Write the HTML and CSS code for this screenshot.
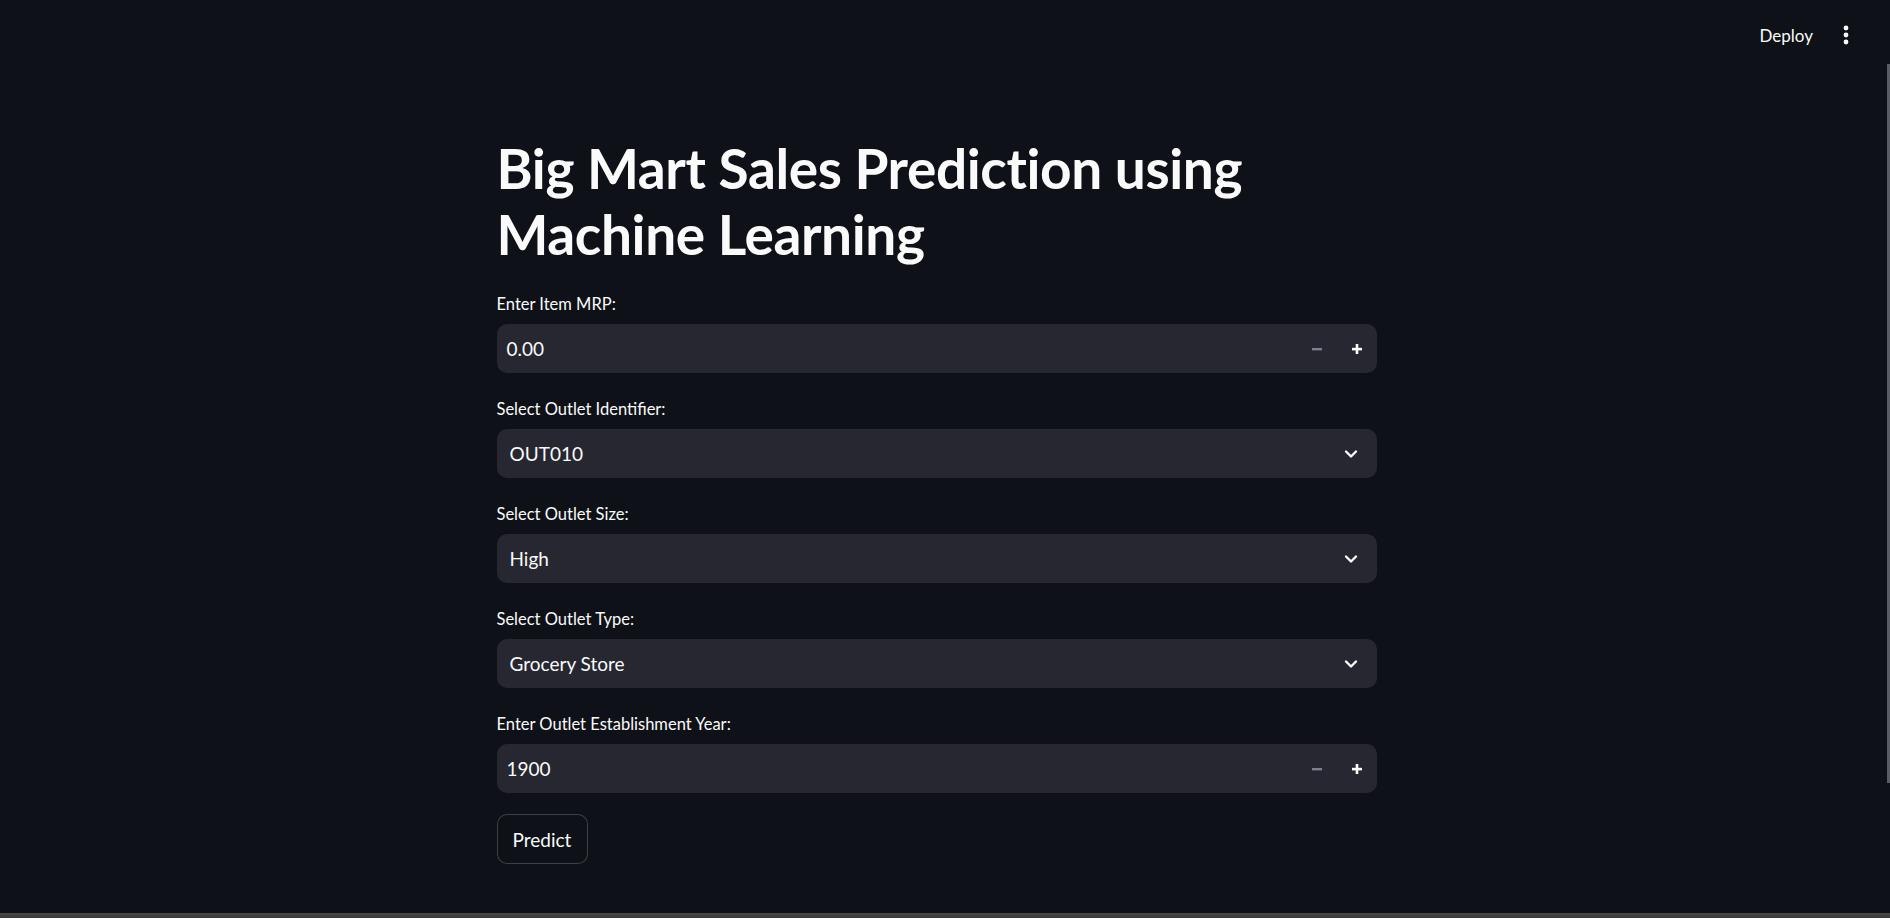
FILE: index.html
```html
<!DOCTYPE html>
<html>
<head>
<meta charset="utf-8">
<link rel="stylesheet" href="styles.css">
</head>
<body>
<div class="app">
  <div class="viewport">
    <header class="header">
      <span class="deploy">Deploy</span>
      <span class="kebab"><svg width="6" height="20" viewBox="0 0 6 20"><circle cx="3" cy="3" r="2.4" fill="#fafafa"/><circle cx="3" cy="10" r="2.4" fill="#fafafa"/><circle cx="3" cy="17" r="2.4" fill="#fafafa"/></svg></span>
    </header>
    <main class="main">
      <h1 class="title">Big Mart Sales Prediction using Machine Learning</h1>
      <div class="widgets">
        <div class="widget">
          <label class="label">Enter Item MRP:</label>
          <div class="field number">
            <span class="value">0.00</span>
            <span class="step minus"><svg width="12" height="12" viewBox="0 0 12 12"><rect x="1" y="5" width="10" height="2.4" fill="#7d7f8c"/></svg></span>
            <span class="step plus"><svg width="12" height="12" viewBox="0 0 12 12"><rect x="1" y="4.8" width="10" height="2.6" fill="#fafafa"/><rect x="4.7" y="1" width="2.6" height="10" fill="#fafafa"/></svg></span>
          </div>
        </div>
        <div class="widget">
          <label class="label">Select Outlet Identifier:</label>
          <div class="field select">
            <span class="value">OUT010</span>
            <span class="chev"><svg width="14" height="10" viewBox="0 0 14 10"><path d="M2 2.5 L7 7.5 L12 2.5" fill="none" stroke="#fafafa" stroke-width="2.4" stroke-linecap="round" stroke-linejoin="round"/></svg></span>
          </div>
        </div>
        <div class="widget">
          <label class="label">Select Outlet Size:</label>
          <div class="field select">
            <span class="value">High</span>
            <span class="chev"><svg width="14" height="10" viewBox="0 0 14 10"><path d="M2 2.5 L7 7.5 L12 2.5" fill="none" stroke="#fafafa" stroke-width="2.4" stroke-linecap="round" stroke-linejoin="round"/></svg></span>
          </div>
        </div>
        <div class="widget">
          <label class="label">Select Outlet Type:</label>
          <div class="field select">
            <span class="value">Grocery Store</span>
            <span class="chev"><svg width="14" height="10" viewBox="0 0 14 10"><path d="M2 2.5 L7 7.5 L12 2.5" fill="none" stroke="#fafafa" stroke-width="2.4" stroke-linecap="round" stroke-linejoin="round"/></svg></span>
          </div>
        </div>
        <div class="widget">
          <label class="label">Enter Outlet Establishment Year:</label>
          <div class="field number">
            <span class="value">1900</span>
            <span class="step minus"><svg width="12" height="12" viewBox="0 0 12 12"><rect x="1" y="5" width="10" height="2.4" fill="#7d7f8c"/></svg></span>
            <span class="step plus"><svg width="12" height="12" viewBox="0 0 12 12"><rect x="1" y="4.8" width="10" height="2.6" fill="#fafafa"/><rect x="4.7" y="1" width="2.6" height="10" fill="#fafafa"/></svg></span>
          </div>
        </div>
        <div class="widget">
          <button class="btn">Predict</button>
        </div>
      </div>
    </main>
  </div>
  <div class="scrolltrack"><div class="thumb"></div></div>
</div>
<div class="bottombar"></div>
</body>
</html>
```

FILE: styles.css
```css
html, body {
  margin: 0;
  padding: 0;
  background: #0e1117;
  height: 918px;
  overflow: hidden;
}
body {
  font-family: "Lato", "Noto Sans", sans-serif;
  color: #fafafa;
  display: flex;
  flex-direction: column;
}
.app {
  display: flex;
  height: 913px;
}
.viewport {
  flex: 1;
  display: flex;
  flex-direction: column;
}
.header {
  height: 70px;
  display: flex;
  justify-content: flex-end;
  align-items: center;
  gap: 30px;
  padding-right: 26px;
  box-sizing: border-box;
}
.deploy {
  font-size: 17px;
  color: #fafafa;
}
.kebab {
  display: flex;
  align-items: center;
}
.main {
  width: 880px;
  margin: 0 auto;
  padding-top: 65px;
  position: relative;
  left: -1px;
}
.title {
  margin: 0;
  font-size: 55px;
  line-height: 66px;
  font-weight: 700;
  letter-spacing: -0.4px;
  padding-bottom: 22px;
}
.widgets {
  display: flex;
  flex-direction: column;
  gap: 21px;
}
.widget {
  display: flex;
  flex-direction: column;
}
.label {
  font-size: 16.5px;
  line-height: 30px;
  height: 30px;
  margin-bottom: 5px;
}
.field {
  height: 49px;
  background: #262730;
  border-radius: 10px;
  display: flex;
  align-items: center;
  font-size: 19px;
}
.number .value {
  flex: 1;
  padding-left: 10px;
}
.select .value {
  flex: 1;
  padding-left: 13px;
}
.step {
  width: 40px;
  height: 49px;
  display: flex;
  align-items: center;
  justify-content: center;
}
.chev {
  width: 40px;
  margin-right: 6px;
  display: flex;
  justify-content: center;
}
.btn {
  align-self: flex-start;
  width: 91px;
  height: 50px;
  background: #0e1117;
  border: 1px solid rgba(250,250,250,0.2);
  border-radius: 10px;
  color: #fafafa;
  font-family: inherit;
  font-size: 19px;
}
.scrolltrack {
  width: 15px;
  position: relative;
}
.thumb {
  position: absolute;
  right: 0;
  top: 64px;
  width: 3px;
  height: 719px;
  background: #5a5c63;
}
.bottombar {
  height: 5px;
  background: linear-gradient(#4a4a4a, #3a3a3a);
}
```
